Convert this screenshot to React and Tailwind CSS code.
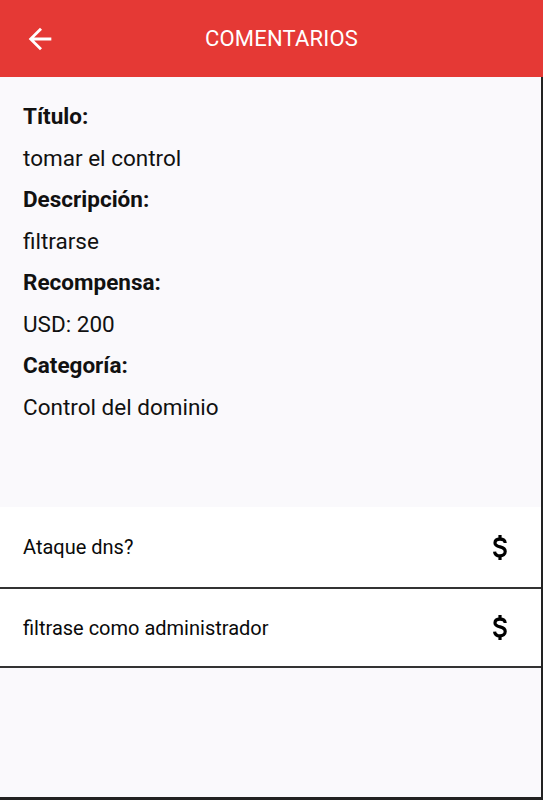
import React from 'react';

const details = [
  { label: 'Título:', value: 'tomar el control' },
  { label: 'Descripción:', value: 'filtrarse' },
  { label: 'Recompensa:', value: 'USD: 200' },
  { label: 'Categoría:', value: 'Control del dominio' },
];

const comments = [
  { id: 1, text: 'Ataque dns?' },
  { id: 2, text: 'filtrase como administrador' },
];

const ArrowBack = () => (
  <svg width="34" height="34" viewBox="0 0 24 24" fill="currentColor">
    <path d="M20 11H7.83l5.59-5.59L12 4l-8 8 8 8 1.41-1.41L7.83 13H20v-2z" />
  </svg>
);

// dollar glyph, like the one in the app
const Dollar = () => (
  <svg width="16" height="27" viewBox="0 0 16 27" fill="none" stroke="#000" strokeWidth="3.2">
    <path d="M8 1v4M8 22v4" />
    <path d="M13.2 9C13 6.4 10.9 5.1 8 5.1 5 5.1 3 6.6 3 8.9c0 2.6 2.4 3.3 5.1 4 2.8.7 5.1 1.6 5.1 4.6 0 2.8-2.4 4.4-5.2 4.4-3 0-5.2-1.5-5.4-4.3" />
  </svg>
);

const App = () => {
  return (
    <div
      className="flex h-[800px] w-full flex-col overflow-hidden bg-[#faf9fc] text-[#111]"
      style={{ fontFamily: 'Roboto, "Noto Sans", sans-serif' }}
    >
      {/* Header */}
      <header className="flex h-[77px] shrink-0 items-center bg-[#e53935] text-white">
        <button className="flex w-[76px] items-center pl-[23px]">
          <ArrowBack />
        </button>
        <h1 className="flex-1 pr-[56px] text-center text-[22px] font-normal tracking-[0.2px]">
          COMENTARIOS
        </h1>
      </header>

      {/* Body */}
      <div className="flex flex-1 flex-col border-r-2 border-b-[3px] border-[#222]">
        <div className="flex flex-col px-[23px] pt-[19px] pb-[79px]">
          {details.map((item) => (
            <React.Fragment key={item.label}>
              <p className="text-[22.5px] leading-[41.5px] font-bold">{item.label}</p>
              <p className="text-[22.5px] leading-[41.5px]">{item.value}</p>
            </React.Fragment>
          ))}
        </div>

        {/* Comments list */}
        <ul className="flex flex-col">
          {comments.map((c) => (
            <li
              key={c.id}
              className="flex h-[79px] items-center justify-between border-b-2 border-[#333] bg-white pl-[23px] pr-[33px] first:h-[82px]"
            >
              <span className="text-[20px] text-[#0a0a0a]">{c.text}</span>
              <Dollar />
            </li>
          ))}
        </ul>
      </div>
    </div>
  );
};

export default App;
